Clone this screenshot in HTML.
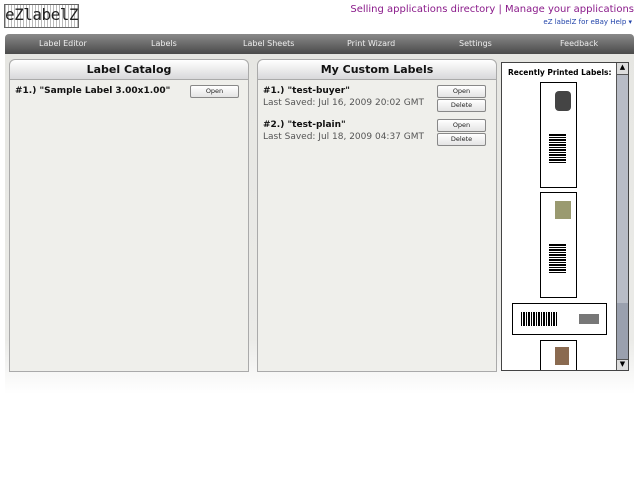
<!DOCTYPE html>
<html><head><style>
body{margin:0;width:640px;height:480px;background:#fff;font-family:"DejaVu Sans",sans-serif;position:relative;overflow:hidden}
.a{position:absolute}
.logo{left:4px;top:4px;width:73px;height:22px;border:1px solid #666;background:repeating-linear-gradient(90deg,#bbb 0 1px,#fff 1px 3px);font:16px "DejaVu Sans Mono",monospace;color:#222;line-height:20px;letter-spacing:-0.5px}
.top{right:6px;top:4px;font-size:10px;color:#8a1a8a}
.help{right:8px;top:18px;font-size:7px;color:#2244aa}
.main{left:5px;top:34px;width:629px;height:360px;background:linear-gradient(#e6e6e2 0,#ebebe8 85%,#fff 100%);border-radius:4px 4px 0 0}
.nav{left:5px;top:34px;width:629px;height:20px;background:linear-gradient(#8a8a8a,#4a4a4a);border-radius:4px 4px 0 0}
.nav span{position:absolute;top:5px;font-size:8px;color:#eee}
.panel{background:#efefeb;border:1px solid #aaa;border-radius:6px 6px 0 0}
.ph{position:absolute;left:0;right:0;top:0;height:19px;background:linear-gradient(#fff,#d8d8da);border-radius:6px 6px 0 0;border-bottom:1px solid #aaa;text-align:center;font-weight:bold;font-size:11px;line-height:20px;color:#111}
.b{position:absolute;width:47px;height:11px;border:1px solid #888;border-radius:2px;background:linear-gradient(#fff,#e4e4e4);font-size:6.5px;text-align:center;line-height:11px;color:#222}
.t{position:absolute;font-size:9px;font-weight:bold;color:#111}
.s{position:absolute;font-size:9px;color:#555}
.lab{position:absolute;background:#fff;border:1px solid #000}
.bc{position:absolute;background:repeating-linear-gradient(0deg,#000 0 1px,#fff 1px 2px,#000 2px 4px,#fff 4px 5px)}
</style></head><body>
<div class="a logo">eZlabelZ</div>
<div class="a top">Selling applications directory | Manage your applications</div>
<div class="a help">eZ labelZ for eBay Help ▾</div>
<div class="a main"></div>
<div class="a nav">
<span style="left:34px">Label Editor</span><span style="left:146px">Labels</span><span style="left:238px">Label Sheets</span><span style="left:342px">Print Wizard</span><span style="left:454px">Settings</span><span style="left:555px">Feedback</span>
</div>
<div class="a panel" style="left:9px;top:59px;width:238px;height:311px"><div class="ph">Label Catalog</div>
<div class="t" style="left:5px;top:26px">#1.) "Sample Label 3.00x1.00"</div>
<div class="b" style="left:180px;top:25px">Open</div></div>
<div class="a panel" style="left:257px;top:59px;width:238px;height:311px"><div class="ph">My Custom Labels</div>
<div class="t" style="left:5px;top:26px">#1.) "test-buyer"</div>
<div class="s" style="left:5px;top:38px">Last Saved: Jul 16, 2009 20:02 GMT</div>
<div class="t" style="left:5px;top:60px">#2.) "test-plain"</div>
<div class="s" style="left:5px;top:72px">Last Saved: Jul 18, 2009 04:37 GMT</div>
<div class="b" style="left:179px;top:25px">Open</div><div class="b" style="left:179px;top:39px">Delete</div>
<div class="b" style="left:179px;top:59px">Open</div><div class="b" style="left:179px;top:73px">Delete</div></div>
<div class="a" style="left:501px;top:62px;width:126px;height:307px;background:#fff;border:1px solid #444;overflow:hidden">
<div class="a" style="left:6px;top:5px;font-size:7.5px;font-weight:bold">Recently Printed Labels:</div>
<div class="lab" style="left:38px;top:19px;width:35px;height:104px"><div class="bc" style="left:8px;top:50px;width:17px;height:30px"></div><div class="a" style="left:14px;top:8px;width:16px;height:20px;background:#444;border-radius:4px"></div></div>
<div class="lab" style="left:38px;top:129px;width:35px;height:104px"><div class="bc" style="left:8px;top:50px;width:17px;height:30px"></div><div class="a" style="left:14px;top:8px;width:16px;height:18px;background:#9a9a70"></div></div>
<div class="lab" style="left:10px;top:240px;width:93px;height:30px"><div class="a" style="left:8px;top:8px;width:36px;height:14px;background:repeating-linear-gradient(90deg,#000 0 1px,#fff 1px 2px,#000 2px 4px,#fff 4px 5px)"></div><div class="a" style="left:66px;top:10px;width:20px;height:10px;background:#777"></div></div>
<div class="lab" style="left:38px;top:277px;width:35px;height:40px"><div class="a" style="left:14px;top:6px;width:14px;height:18px;background:#8a6a50"></div></div>
<div class="a" style="left:114px;top:0;width:12px;height:307px;background:#9aa0ae;border-left:1px solid #555"></div>
<div class="a" style="left:115px;top:0;width:11px;height:11px;background:#ddd;border-bottom:1px solid #555;font-size:7px;text-align:center">▲</div>
<div class="a" style="left:115px;top:296px;width:11px;height:11px;background:#ddd;border-top:1px solid #555;font-size:7px;text-align:center">▼</div>
<div class="a" style="left:115px;top:12px;width:11px;height:228px;background:#b8bcc6"></div>
</div>
</body></html>
